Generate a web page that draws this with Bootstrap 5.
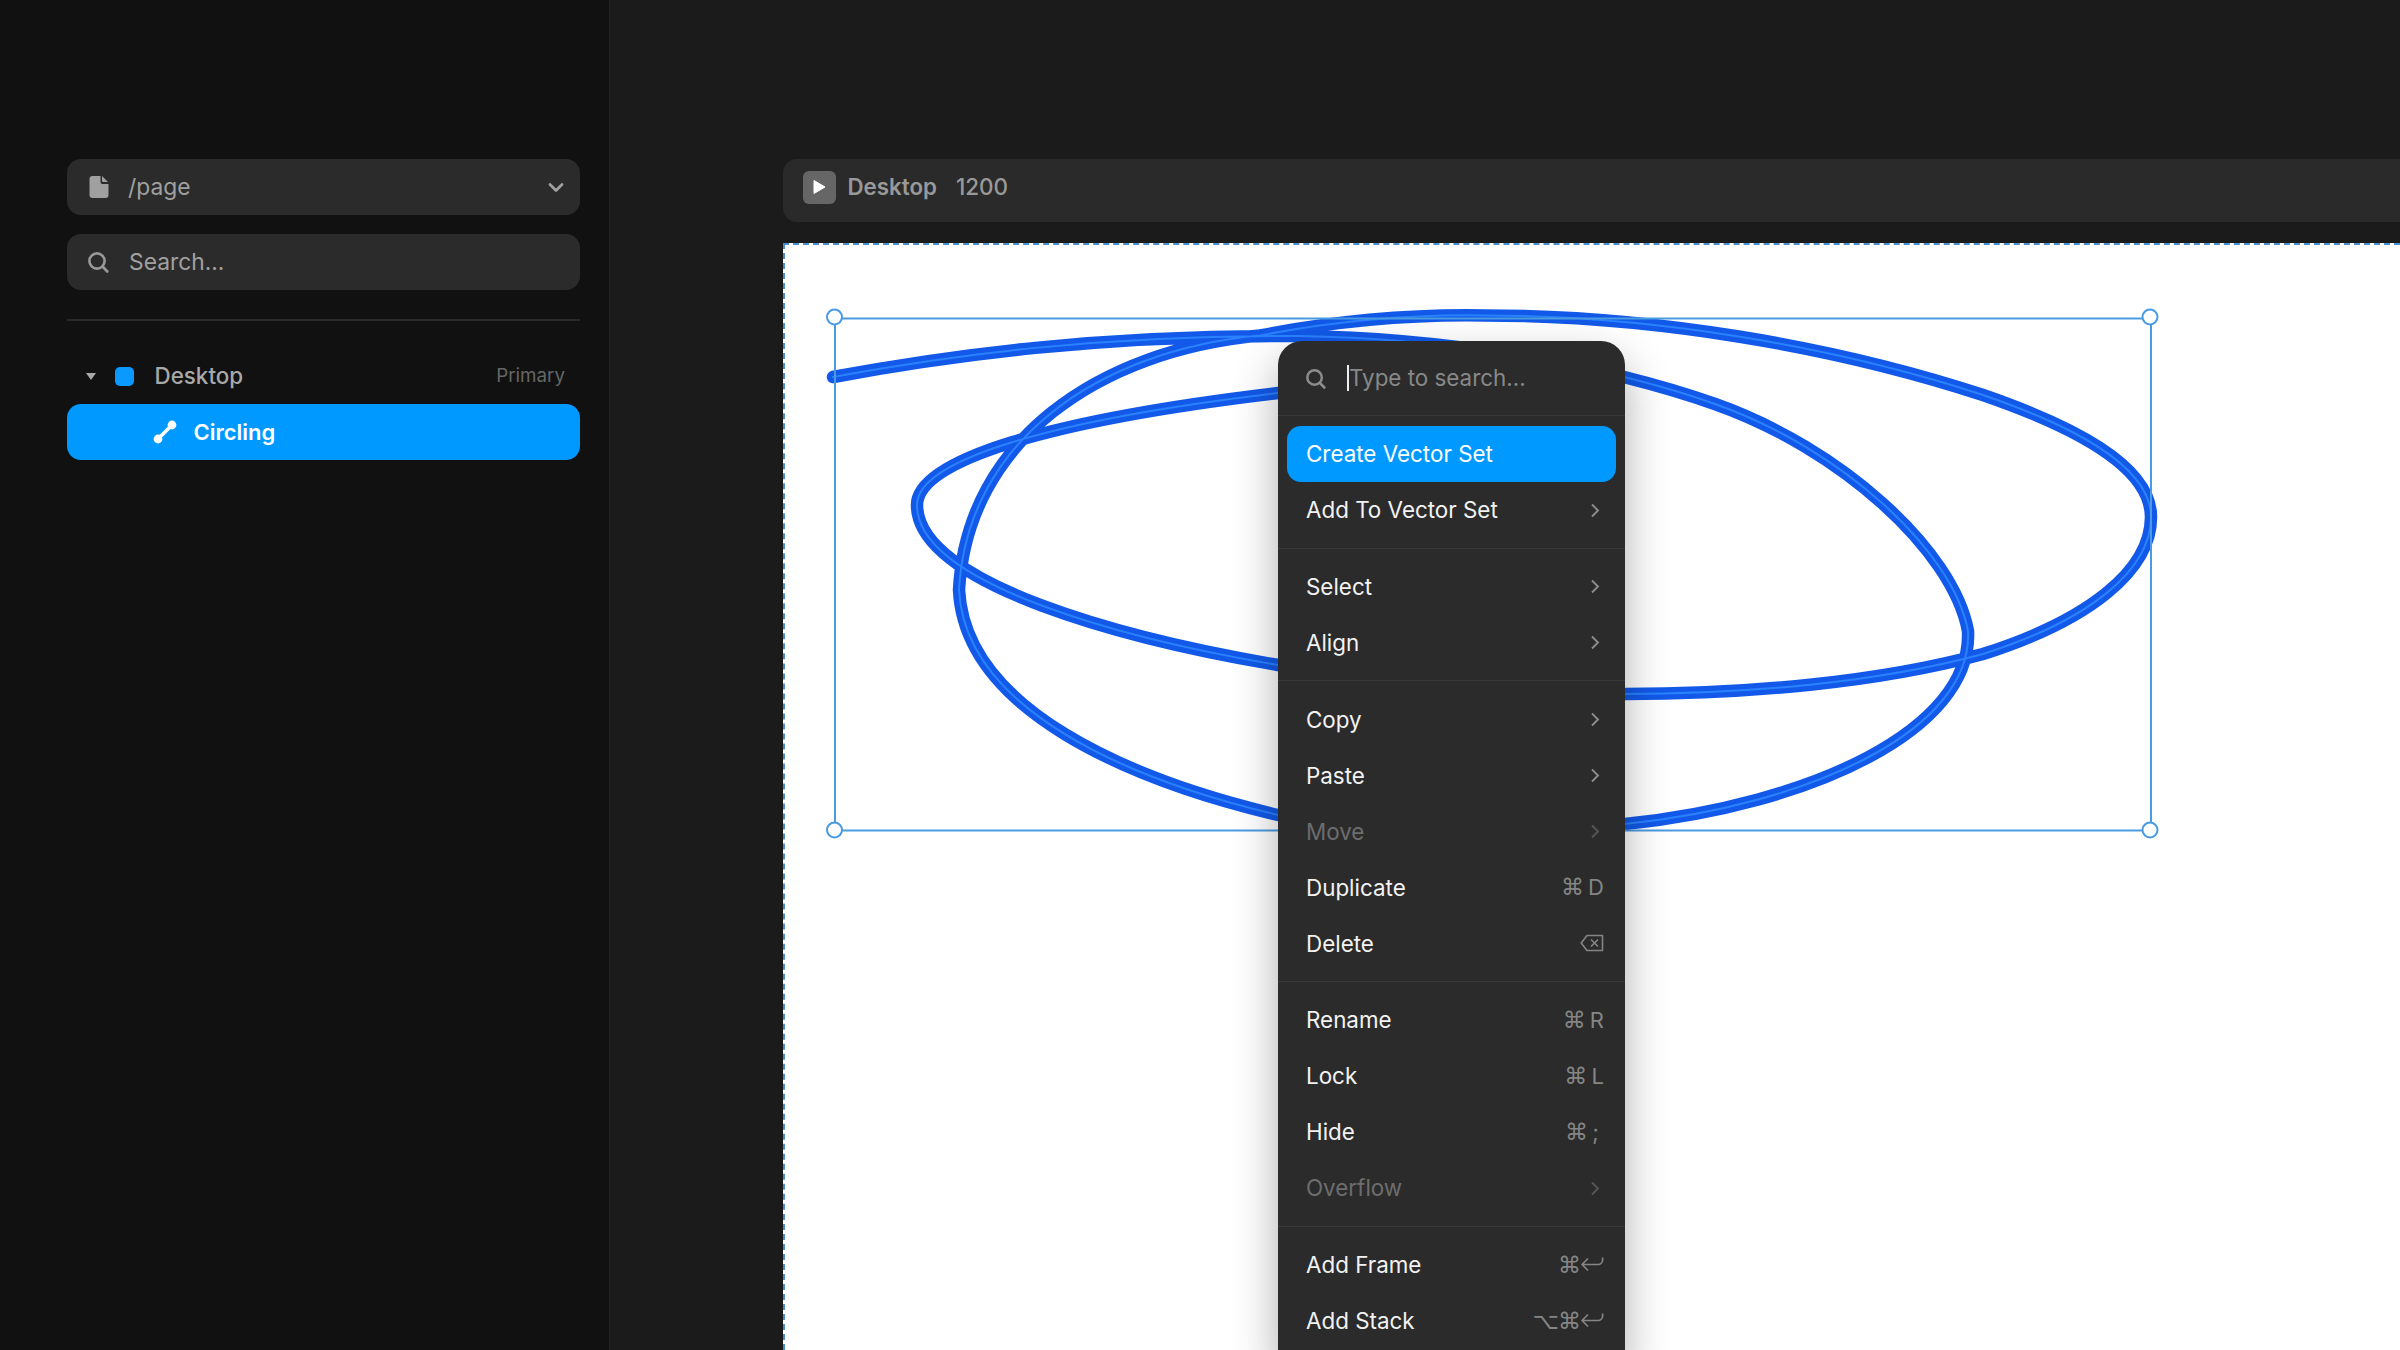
<!DOCTYPE html>
<html lang="en">
<head>
    <meta charset="UTF-8">
    <title>Circling</title>
    <link href="https://cdn.jsdelivr.net/npm/bootstrap@5.3.0/dist/css/bootstrap.min.css" rel="stylesheet">
    <style>
        body {
            background: #1b1b1b;
            font-family: Inter, "Liberation Sans", sans-serif;
            font-size: 22.8px;
            font-weight: 400;
        }
        /* left panel */
        .side-panel {
            width: 610px;
            flex: none;
            background: #111;
            border-right: 1px solid #232323;
            padding: 159px 29px 0 66.5px;
        }
        .side-field {
            height: 56px;
            background: #2b2b2b;
            border-radius: 14px;
            padding: 0 16px 0 22px;
            color: #a0a0a0;
            margin-bottom: 19px;
        }
        .side-field svg { flex: none; }
        .side-field .field-label { margin-left: 19.5px; }
        .side-field .field-label.after-glass { margin-left: 20px; }
        .side-search-glass { margin-left: -1.5px; }
        .side-rule { height: 2px; background: #2a2a2a; margin: 29px 0 27px; }
        .tree-row { height: 56px; padding: 0 15px 0 19px; color: #a8a8a8; font-weight: 500; font-size: 22.4px; }
        .tree-swatch { width: 19px; height: 19px; background: #0a99ff; border-radius: 5px; margin: 0 20.5px 0 19.5px; }
        .tree-tag { font-size: 18.8px; color: #666; font-weight: 400; }
        .tree-row.is-active {
            background: #0099ff;
            color: #fff;
            border-radius: 14px;
            padding-left: 86px;
            font-weight: 600;
            font-size: 22px;
        }
        .tree-row.is-active svg { margin-right: 17px; }

        /* canvas area */
        .canvas-area { padding: 159px 0 0 173px; min-width: 0; }
        .frame-bar {
            height: 63px;
            background: #2a2a2a;
            border-radius: 14px 0 0 14px;
            padding: 0 0 7px 19.5px;
            color: #999;
            margin-bottom: 22px;
            font-weight: 500;
            font-size: 22.5px;
        }
        .play-box {
            width: 33px; height: 33px;
            background: #666;
            border-radius: 6px;
            margin-right: 12px;
        }
        .frame-bar b { font-weight: 600; margin-right: 19px; font-size: 22.3px; }
        .frame-sheet {
            background: #fff;
            border-top: 2px dashed #4a8fd0;
            border-left: 2px dashed #4a8fd0;
            margin-top: -1px;
        }
        .ink-layer { position: absolute; left: 0; top: 0; }

        /* context menu */
        .ctx-menu {
            position: absolute;
            left: 1278px;
            top: 341px;
            width: 347px;
            background: #2b2b2b;
            border-radius: 24px 24px 0 0;
            box-shadow: 0 20px 45px rgba(0, 0, 0, .32);
            color: #f2f2f2;
            font-size: 22.4px;
        }
        .ctx-search {
            height: 75px;
            padding: 0 0 0 27px;
            border-bottom: 1px solid #383838;
            color: #888;
        }
        .ctx-caret { width: 2px; height: 26px; background: #eee; margin: 0 0 0 21px; }
        .ctx-group { padding: 10px 9px 9.7px 9px; border-bottom: 1px solid #383838; }
        .ctx-item {
            height: 56px;
            padding: 0 10px 0 19px;
            border-radius: 14px;
        }
        .ctx-item.is-hot { background: #0099ff; color: #fff; }
        .ctx-item.is-off { color: #6d6d6d; }
        .ctx-item.is-off .ctx-arrow { stroke: #565656; }
        .ctx-arrow { stroke: #8c8c8c; margin-right: 6px; }
        .ctx-keys {
            color: #858585;
            font-size: 22px;
            font-weight: 400;
            font-family: Inter, "DejaVu Sans", sans-serif;
            margin-right: 2px;
            word-spacing: -1px;
        }
        .ctx-cmd { font-size: 23px; font-family: "DejaVu Sans", sans-serif; letter-spacing: -1px; }
        .ctx-keys svg { display: block; }
    </style>
</head>
<body class="vh-100 overflow-hidden d-flex position-relative">

    <aside class="side-panel">
        <div class="side-field d-flex align-items-center">
            <svg width="20" height="24" viewBox="0 0 20 24"><path d="M3 1h8v6a2 2 0 0 0 2 2h6v11a3 3 0 0 1-3 3H3a3 3 0 0 1-3-3V4a3 3 0 0 1 3-3z" fill="#a0a0a0" transform="translate(.5 0)"/><path d="M13 1l6 6h-5a1 1 0 0 1-1-1z" fill="#a0a0a0"/></svg>
            <span class="field-label">/page</span>
            <svg class="ms-auto" width="16" height="11" viewBox="0 0 16 11"><path d="M2 2.5l6 6 6-6" fill="none" stroke="#a0a0a0" stroke-width="2.8" stroke-linecap="round" stroke-linejoin="round"/></svg>
        </div>
        <div class="side-field d-flex align-items-center">
            <svg class="side-search-glass" width="22" height="22" viewBox="0 0 22 22"><circle cx="10" cy="10" r="7.6" fill="none" stroke="#999" stroke-width="2.6"/><path d="M15.8 15.8l4.4 4.6" stroke="#999" stroke-width="2.8" stroke-linecap="round"/></svg>
            <span class="field-label after-glass">Search...</span>
        </div>
        <div class="side-rule"></div>
        <div class="tree-row d-flex align-items-center">
            <svg width="10" height="7" viewBox="0 0 10 7"><path d="M0 0h10L5 7z" fill="#a8a8a8"/></svg>
            <span class="tree-swatch"></span>
            <span>Desktop</span>
            <span class="tree-tag ms-auto">Primary</span>
        </div>
        <div class="tree-row is-active d-flex align-items-center">
            <svg width="24" height="24" viewBox="0 0 24 24"><path d="M5 19L19 5" stroke="#fff" stroke-width="3.6"/><circle cx="19" cy="5" r="4.4" fill="#fff"/><circle cx="5" cy="19" r="4.4" fill="#fff"/></svg>
            <span>Circling</span>
        </div>
    </aside>

    <main class="canvas-area flex-grow-1 d-flex flex-column">
        <div class="frame-bar d-flex align-items-center flex-none">
            <span class="play-box d-flex align-items-center justify-content-center">
                <svg width="13" height="16" viewBox="0 0 13 16"><path d="M1 1.5v13L12 8z" fill="#fff" stroke="#fff" stroke-linejoin="round"/></svg>
            </span>
            <b>Desktop</b>
            <span>1200</span>
        </div>
        <div class="frame-sheet flex-grow-1"></div>
    </main>

    <!-- the drawing and its selection box sit on the free canvas -->
    <svg class="ink-layer" width="2400" height="1350" viewBox="0 0 2400 1350" fill="none">
        <defs>
            <path id="scribble" d="M833 377C950 355 1100 335 1300 336C1430 338 1590 360 1715 404C1840 448 1953 550 1968 631C1973 730 1810 805 1625 824C1510 840 1390 840 1278 815C1130 780 965 710 959 590C967 440 1100 350 1260 335.5C1330 322 1400 314 1485 315.5C1650 315.5 1830 345 1983 395C2070 425 2151 465 2151 517C2151 570 2090 620 1983 654C1880 682 1750 694 1625 694C1500 694 1390 685 1278 665C1130 640 917 585 917 505C917 460 1050 420 1278 393L1400 380"/>
        </defs>
        <use href="#scribble" stroke="#1259e9" stroke-width="12.5" stroke-linecap="round" stroke-linejoin="round"/>
        <use href="#scribble" stroke="#2b82ff" stroke-width="2" stroke-linecap="round" stroke-linejoin="round"/>
        <rect x="835" y="318.5" width="1316" height="512" stroke="#4a9be2" stroke-width="2"/>
        <g fill="#fff" stroke="#4a9be2" stroke-width="2">
            <circle cx="834.5" cy="317" r="7.5"/>
            <circle cx="2150" cy="317" r="7.5"/>
            <circle cx="834.5" cy="830" r="7.5"/>
            <circle cx="2150" cy="830" r="7.5"/>
        </g>
    </svg>

    <div class="ctx-menu">
        <div class="ctx-search d-flex align-items-center">
            <svg width="21" height="21" viewBox="0 0 22 22"><circle cx="10" cy="10" r="7.6" fill="none" stroke="#8c8c8c" stroke-width="2.6"/><path d="M15.8 15.8l4.4 4.6" stroke="#8c8c8c" stroke-width="2.8" stroke-linecap="round"/></svg>
            <span class="ctx-caret"></span>
            <span>Type to search...</span>
        </div>
        <div class="ctx-group">
            <div class="ctx-item is-hot d-flex align-items-center">Create Vector Set</div>
            <div class="ctx-item d-flex align-items-center justify-content-between">Add To Vector Set<svg class="ctx-arrow" width="10" height="15" viewBox="0 0 10 15" fill="none" stroke-width="1.9"><path d="M2 1.5L8 7.5l-6 6"/></svg></div>
        </div>
        <div class="ctx-group">
            <div class="ctx-item d-flex align-items-center justify-content-between">Select<svg class="ctx-arrow" width="10" height="15" viewBox="0 0 10 15" fill="none" stroke-width="1.9"><path d="M2 1.5L8 7.5l-6 6"/></svg></div>
            <div class="ctx-item d-flex align-items-center justify-content-between">Align<svg class="ctx-arrow" width="10" height="15" viewBox="0 0 10 15" fill="none" stroke-width="1.9"><path d="M2 1.5L8 7.5l-6 6"/></svg></div>
        </div>
        <div class="ctx-group">
            <div class="ctx-item d-flex align-items-center justify-content-between">Copy<svg class="ctx-arrow" width="10" height="15" viewBox="0 0 10 15" fill="none" stroke-width="1.9"><path d="M2 1.5L8 7.5l-6 6"/></svg></div>
            <div class="ctx-item d-flex align-items-center justify-content-between">Paste<svg class="ctx-arrow" width="10" height="15" viewBox="0 0 10 15" fill="none" stroke-width="1.9"><path d="M2 1.5L8 7.5l-6 6"/></svg></div>
            <div class="ctx-item is-off d-flex align-items-center justify-content-between">Move<svg class="ctx-arrow" width="10" height="15" viewBox="0 0 10 15" fill="none" stroke-width="1.9"><path d="M2 1.5L8 7.5l-6 6"/></svg></div>
            <div class="ctx-item d-flex align-items-center justify-content-between">Duplicate<span class="ctx-keys"><span class="ctx-cmd">⌘</span> D</span></div>
            <div class="ctx-item d-flex align-items-center justify-content-between">Delete
                <span class="ctx-keys"><svg width="24" height="18" viewBox="0 0 24 18" fill="none" stroke="#858585" stroke-width="1.6"><path d="M7 1.5h15.5v15H7L1.2 9z" stroke-linejoin="round"/><path d="M11 5.5l7 7m0-7l-7 7"/></svg></span>
            </div>
        </div>
        <div class="ctx-group">
            <div class="ctx-item d-flex align-items-center justify-content-between">Rename<span class="ctx-keys"><span class="ctx-cmd">⌘</span> R</span></div>
            <div class="ctx-item d-flex align-items-center justify-content-between">Lock<span class="ctx-keys"><span class="ctx-cmd">⌘</span> L</span></div>
            <div class="ctx-item d-flex align-items-center justify-content-between">Hide<span class="ctx-keys"><span class="ctx-cmd">⌘</span> ;&nbsp;</span></div>
            <div class="ctx-item is-off d-flex align-items-center justify-content-between">Overflow<svg class="ctx-arrow" width="10" height="15" viewBox="0 0 10 15" fill="none" stroke-width="1.9"><path d="M2 1.5L8 7.5l-6 6"/></svg></div>
        </div>
        <div class="ctx-group">
            <div class="ctx-item d-flex align-items-center justify-content-between">Add Frame
                <span class="ctx-keys d-flex align-items-center"><span class="ctx-cmd">⌘</span><svg width="24" height="17" viewBox="0 0 24 17" fill="none" stroke="#858585" stroke-width="1.7"><path d="M8 2.5L2 8.5l6 6M2 8.5h16a4.6 4.6 0 0 0 4.6-4.6V1.5" stroke-linejoin="round"/></svg></span>
            </div>
            <div class="ctx-item d-flex align-items-center justify-content-between">Add Stack
                <span class="ctx-keys d-flex align-items-center"><span class="ctx-cmd">⌥⌘</span><svg width="24" height="17" viewBox="0 0 24 17" fill="none" stroke="#858585" stroke-width="1.7"><path d="M8 2.5L2 8.5l6 6M2 8.5h16a4.6 4.6 0 0 0 4.6-4.6V1.5" stroke-linejoin="round"/></svg></span>
            </div>
        </div>
    </div>

    <script src="https://cdn.jsdelivr.net/npm/bootstrap@5.3.0/dist/js/bootstrap.bundle.min.js"></script>
</body>
</html>
